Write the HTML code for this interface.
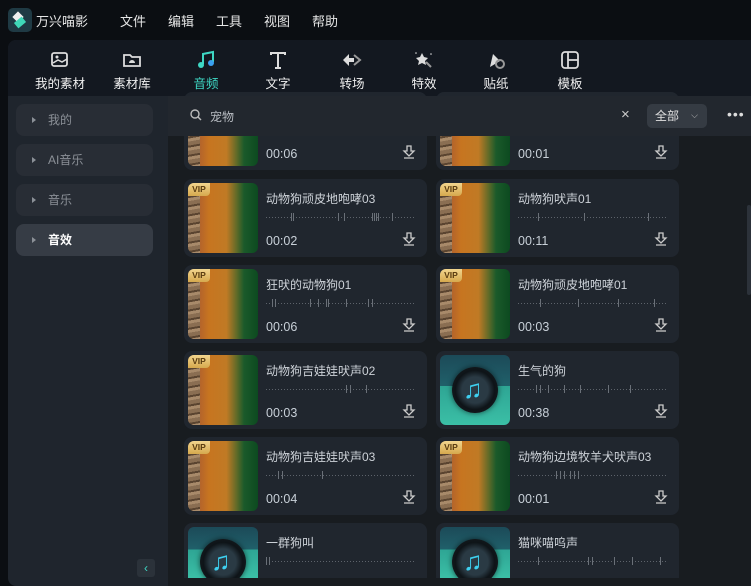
<!DOCTYPE html>
<html><head><meta charset="utf-8"><style>
*{box-sizing:border-box;margin:0;padding:0}
body{width:751px;height:586px;overflow:hidden;background:#0b0e12;font-family:"Liberation Sans","Noto Sans CJK SC",sans-serif;color:#d8dce2;position:relative}
.top{position:absolute;left:0;top:0;width:751px;height:40px}
.logo{position:absolute;left:8px;top:8px;width:24px;height:24px;border-radius:5px;background:#1f3a44}
.logo:before{content:"";position:absolute;left:6px;top:5px;width:8px;height:8px;background:#eee;transform:rotate(45deg)}
.logo:after{content:"";position:absolute;left:7px;top:11px;width:10px;height:7px;background:#3fd8b8;transform:rotate(-40deg)}
.title{position:absolute;left:36px;top:11px;font-size:13px;color:#e6e6e6}
.menu{position:absolute;top:11px;font-size:13px;color:#e6e6e6}
.panel{position:absolute;left:8px;top:40px;width:743px;height:546px;border-radius:8px 0 0 8px;background:#1f252d;overflow:hidden}
.tool{position:absolute;left:0;top:0;width:743px;height:56px;background:#131820}
.ti{position:absolute;top:10px;width:60px;text-align:center;font-size:12.5px;color:#f0f0f0}
.ti svg{display:block;margin:0 auto 3px;width:22px;height:20px}
.side{position:absolute;left:8px;width:137px;height:32px;border-radius:8px;background:#282d35;font-size:12px;color:#8b9097;line-height:32px;padding-left:32px}
.side:before{content:"";position:absolute;left:16px;top:13px;border-left:4px solid #8b9097;border-top:3px solid transparent;border-bottom:3px solid transparent}
.side.act{background:#363c45;color:#fff;font-weight:bold}
.content{position:absolute;left:160px;top:56px;width:583px;height:490px;background:#181c20}
.search{position:absolute;left:168px;top:96px;width:583px;height:40px;background:#22272e}
.card{position:absolute;width:243px;height:78px;border-radius:8px;background:#20262e}
.th{position:absolute;left:4px;top:4px;width:70px;height:70px;border-radius:6px;overflow:hidden;background:linear-gradient(90deg,#7e6548 0,#9a6a40 10%,#b5652a 18%,#c77520 30%,#c07a25 55%,#5d6a28 70%,#1b5a2a 80%,#0c4a20 100%)}
.th .rk{position:absolute;left:0;top:0;width:12px;height:100%;background:repeating-linear-gradient(170deg,#8a6e52 0 4px,#5a4430 4px 6px,#a88a6a 6px 9px)}
.vip{position:absolute;left:0;top:0;width:22px;height:13px;background:linear-gradient(#f2d58e,#d6a94e);border-radius:0 0 4px 0;font-size:8.5px;font-weight:bold;color:#5a3c10;text-align:center;line-height:13px}
.mu{background:linear-gradient(#1c4a58 0,#20606a 44%,#2ea594 44%,#3bbfa6 100%)}
.disc{position:absolute;left:12px;top:12px;width:46px;height:46px;border-radius:50%;background:radial-gradient(circle,#2a3a44 0 40%,#0e1418 60%,#1a1e22 100%);box-shadow:0 0 6px rgba(0,0,0,.6)}
.disc span{position:absolute;left:11px;top:7px;font-size:26px;line-height:30px;color:#3ed0f0;font-weight:bold}
.nm{position:absolute;left:82px;top:11px;font-size:12px;color:#cdd2d8;white-space:nowrap}
.wv{position:absolute;left:82px;top:34px;width:148px;height:8px;background:repeating-linear-gradient(90deg,#5d636b 0 1px,transparent 1px 3px) 0 50%/100% 1px no-repeat}
.wv i{position:absolute;top:0;width:1px;height:8px;background:#6a7078}
.tm{position:absolute;left:82px;top:55px;font-size:12.5px;color:#c8d0d8}
.dl{position:absolute;left:218px;top:52px;width:14px;height:16px}
</style></head><body>
<div class="top">
<div class="logo"></div>
<div class="title">万兴喵影</div>
<div class="menu" style="left:120px">文件</div>
<div class="menu" style="left:168px">编辑</div>
<div class="menu" style="left:216px">工具</div>
<div class="menu" style="left:264px">视图</div>
<div class="menu" style="left:312px">帮助</div>
</div>
<div class="panel">
<div class="tool">
<div class="ti" style="left:22px"><svg viewBox="0 0 22 20"><rect x="3" y="3" width="15" height="13" rx="2" fill="none" stroke="#ddd" stroke-width="1.8"/><circle cx="8" cy="7" r="1.5" fill="#ddd"/><path d="M4 13l5-3 4 2 5-3" stroke="#ddd" stroke-width="1.5" fill="none"/></svg>我的素材</div>
<div class="ti" style="left:94px"><svg viewBox="0 0 22 20"><path d="M3 5h6l2 2h8v9H3z" fill="none" stroke="#ddd" stroke-width="1.8"/><path d="M8 13a3 3 0 0 1 6 0z" fill="#ddd"/></svg>素材库</div>
<div class="ti" style="left:168px;color:#3ed7c4"><svg viewBox="0 0 22 20"><path d="M8 14V4l10-2v10" stroke="#3ed7c4" stroke-width="2" fill="none"/><circle cx="6" cy="15" r="3" fill="#3ed7c4"/><circle cx="16" cy="13" r="3" fill="#3aa0f0"/></svg>音频</div>
<div class="ti" style="left:240px"><svg viewBox="0 0 22 20"><path d="M4 5V3h14v2M11 3v15M8 18h6" stroke="#ddd" stroke-width="2" fill="none"/></svg>文字</div>
<div class="ti" style="left:314px"><svg viewBox="0 0 22 20"><path d="M2 10l6-6v4h5v4H8v4z" fill="#ddd"/><path d="M13 5l6 5-6 5" stroke="#999" stroke-width="2" fill="none"/></svg>转场</div>
<div class="ti" style="left:386px"><svg viewBox="0 0 22 20"><path d="M9 3l2 4 4 1-3 3 1 4-4-2-4 2 1-4-3-3 4-1z" fill="#ddd"/><path d="M13 12l5 5" stroke="#999" stroke-width="2"/><circle cx="3" cy="3" r=".8" fill="#ddd"/><circle cx="18" cy="4" r=".8" fill="#ddd"/></svg>特效</div>
<div class="ti" style="left:458px"><svg viewBox="0 0 22 20"><path d="M5 17l3-13 7 7z" fill="#ddd"/><circle cx="15" cy="14" r="4" fill="none" stroke="#999" stroke-width="2"/></svg>贴纸</div>
<div class="ti" style="left:532px"><svg viewBox="0 0 22 20"><rect x="3" y="2" width="16" height="16" rx="3" fill="none" stroke="#ddd" stroke-width="1.8"/><path d="M9 2v16M9 10h10" stroke="#ddd" stroke-width="1.8"/></svg>模板</div>
</div>
<div class="side" style="top:64px">我的</div>
<div class="side" style="top:104px">AI音乐</div>
<div class="side" style="top:144px">音乐</div>
<div class="side act" style="top:184px">音效</div>
<div style="position:absolute;left:129px;top:519px;width:18px;height:18px;border-radius:3px;background:#2b323a;color:#3ed7c4;font-size:12px;text-align:center;line-height:18px">‹</div>
<div class="content">
<div style="position:absolute;left:579px;top:109px;width:4px;height:90px;border-radius:2px;background:#2c323a"></div>
</div>
</div>
<div id="cards">
<div class="card" style="left:184px;top:92px"><div class="th"><div class="rk"></div></div><div class="tm">00:06</div><svg class="dl" viewBox="0 0 14 16"><path d="M5 2h4v5h3l-5 5-5-5h3z M2 14h10" fill="none" stroke="#ccc" stroke-width="1.3"/></svg></div>
<div class="card" style="left:436px;top:92px"><div class="th"><div class="rk"></div></div><div class="tm">00:01</div><svg class="dl" viewBox="0 0 14 16"><path d="M5 2h4v5h3l-5 5-5-5h3z M2 14h10" fill="none" stroke="#ccc" stroke-width="1.3"/></svg></div>

<div class="card" style="left:184px;top:179px"><div class="th"><div class="rk"></div><div class="vip">VIP</div></div><div class="nm">动物狗顽皮地咆哮03</div><div class="wv"><i style="left:25px"></i><i style="left:27px"></i><i style="left:72px"></i><i style="left:78px"></i><i style="left:106px"></i><i style="left:108px"></i><i style="left:110px"></i><i style="left:112px"></i><i style="left:126px"></i></div><div class="tm">00:02</div><svg class="dl" viewBox="0 0 14 16"><path d="M5 2h4v5h3l-5 5-5-5h3z M2 14h10" fill="none" stroke="#ccc" stroke-width="1.3"/></svg></div>
<div class="card" style="left:436px;top:179px"><div class="th"><div class="rk"></div><div class="vip">VIP</div></div><div class="nm">动物狗吠声01</div><div class="wv"><i style="left:20px"></i><i style="left:66px"></i><i style="left:130px"></i></div><div class="tm">00:11</div><svg class="dl" viewBox="0 0 14 16"><path d="M5 2h4v5h3l-5 5-5-5h3z M2 14h10" fill="none" stroke="#ccc" stroke-width="1.3"/></svg></div>

<div class="card" style="left:184px;top:265px"><div class="th"><div class="rk"></div><div class="vip">VIP</div></div><div class="nm">狂吠的动物狗01</div><div class="wv"><i style="left:6px"></i><i style="left:9px"></i><i style="left:44px"></i><i style="left:52px"></i><i style="left:60px"></i><i style="left:62px"></i><i style="left:80px"></i><i style="left:102px"></i><i style="left:106px"></i></div><div class="tm">00:06</div><svg class="dl" viewBox="0 0 14 16"><path d="M5 2h4v5h3l-5 5-5-5h3z M2 14h10" fill="none" stroke="#ccc" stroke-width="1.3"/></svg></div>
<div class="card" style="left:436px;top:265px"><div class="th"><div class="rk"></div><div class="vip">VIP</div></div><div class="nm">动物狗顽皮地咆哮01</div><div class="wv"><i style="left:22px"></i><i style="left:60px"></i><i style="left:100px"></i><i style="left:136px"></i></div><div class="tm">00:03</div><svg class="dl" viewBox="0 0 14 16"><path d="M5 2h4v5h3l-5 5-5-5h3z M2 14h10" fill="none" stroke="#ccc" stroke-width="1.3"/></svg></div>

<div class="card" style="left:184px;top:351px"><div class="th"><div class="rk"></div><div class="vip">VIP</div></div><div class="nm">动物狗吉娃娃吠声02</div><div class="wv"><i style="left:80px"></i><i style="left:84px"></i><i style="left:100px"></i></div><div class="tm">00:03</div><svg class="dl" viewBox="0 0 14 16"><path d="M5 2h4v5h3l-5 5-5-5h3z M2 14h10" fill="none" stroke="#ccc" stroke-width="1.3"/></svg></div>
<div class="card" style="left:436px;top:351px"><div class="th mu"><div class="disc"><span>♫</span></div></div><div class="nm">生气的狗</div><div class="wv"><i style="left:18px"></i><i style="left:22px"></i><i style="left:30px"></i><i style="left:46px"></i><i style="left:62px"></i><i style="left:90px"></i><i style="left:112px"></i></div><div class="tm">00:38</div><svg class="dl" viewBox="0 0 14 16"><path d="M5 2h4v5h3l-5 5-5-5h3z M2 14h10" fill="none" stroke="#ccc" stroke-width="1.3"/></svg></div>

<div class="card" style="left:184px;top:437px"><div class="th"><div class="rk"></div><div class="vip">VIP</div></div><div class="nm">动物狗吉娃娃吠声03</div><div class="wv"><i style="left:12px"></i><i style="left:16px"></i><i style="left:56px"></i></div><div class="tm">00:04</div><svg class="dl" viewBox="0 0 14 16"><path d="M5 2h4v5h3l-5 5-5-5h3z M2 14h10" fill="none" stroke="#ccc" stroke-width="1.3"/></svg></div>
<div class="card" style="left:436px;top:437px"><div class="th"><div class="rk"></div><div class="vip">VIP</div></div><div class="nm">动物狗边境牧羊犬吠声03</div><div class="wv"><i style="left:38px"></i><i style="left:42px"></i><i style="left:46px"></i><i style="left:52px"></i><i style="left:56px"></i><i style="left:60px"></i></div><div class="tm">00:01</div><svg class="dl" viewBox="0 0 14 16"><path d="M5 2h4v5h3l-5 5-5-5h3z M2 14h10" fill="none" stroke="#ccc" stroke-width="1.3"/></svg></div>

<div class="card" style="left:184px;top:523px;height:55px;border-radius:8px 8px 0 0;overflow:hidden"><div class="th mu" style="height:51px;border-radius:6px 6px 0 0"><div class="disc"><span>♫</span></div></div><div class="nm">一群狗叫</div><div class="wv"><i style="left:0"></i><i style="left:3px"></i></div></div>
<div class="card" style="left:436px;top:523px;height:55px;border-radius:8px 8px 0 0;overflow:hidden"><div class="th mu" style="height:51px;border-radius:6px 6px 0 0"><div class="disc"><span>♫</span></div></div><div class="nm">猫咪喵呜声</div><div class="wv"><i style="left:20px"></i><i style="left:70px"></i><i style="left:74px"></i><i style="left:96px"></i><i style="left:114px"></i><i style="left:142px"></i></div></div>
</div>
<div class="search">
<svg style="position:absolute;left:22px;top:13px" width="12" height="12" viewBox="0 0 12 12"><circle cx="5" cy="5" r="4" fill="none" stroke="#bbb" stroke-width="1.4"/><path d="M8 8l3 3" stroke="#bbb" stroke-width="1.4"/></svg>
<div style="position:absolute;left:42px;top:12px;font-size:12px;color:#b8bcc2">宠物</div>
<div style="position:absolute;left:453px;top:10px;font-size:15px;color:#ccc">×</div>
<div style="position:absolute;left:479px;top:8px;width:60px;height:24px;border-radius:5px;background:#353b43;font-size:12px;line-height:24px;padding-left:8px;color:#e0e0e0">全部<span style="position:absolute;right:9px;top:-1px;font-size:9px;color:#bbb">⌵</span></div>
<div style="position:absolute;left:559px;top:10px;font-size:14px;color:#ddd;letter-spacing:1px">•••</div>
</div>
<div style="position:absolute;left:168px;top:578px;width:583px;height:8px;background:#181c20"></div>
</body></html>
